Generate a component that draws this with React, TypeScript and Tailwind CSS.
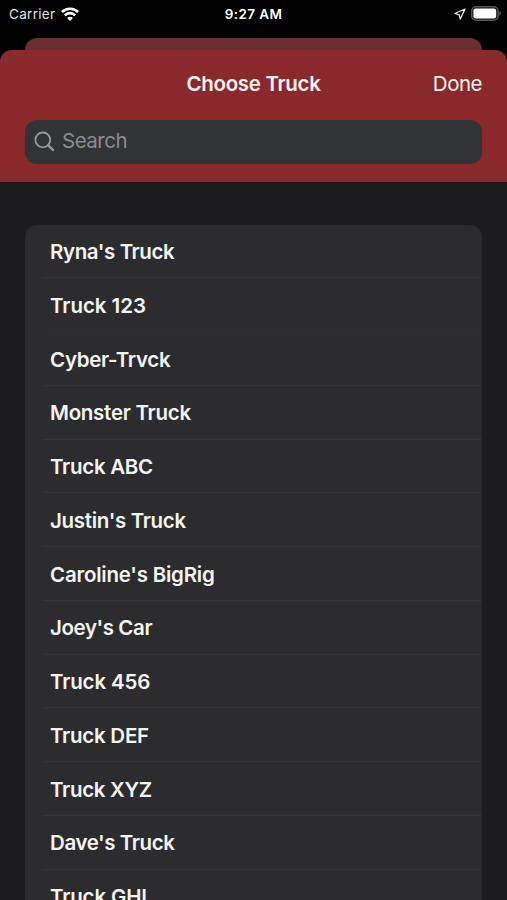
const trucks = [
  { name: "Ryna's Truck", tracking: "tracking-[-0.4px]" },
  { name: "Truck 123", tracking: "tracking-[-0.05px]" },
  { name: "Cyber-Trvck", tracking: "tracking-[-0.3px]" },
  { name: "Monster Truck", tracking: "tracking-[-0.27px]" },
  { name: "Truck ABC", tracking: "tracking-[-0.27px]" },
  { name: "Justin's Truck", tracking: "tracking-[-0.32px]" },
  { name: "Caroline's BigRig", tracking: "tracking-[-0.22px]" },
  { name: "Joey's Car", tracking: "tracking-[-0.4px]" },
  { name: "Truck 456", tracking: "tracking-[-0.15px]" },
  { name: "Truck DEF", tracking: "tracking-[-0.25px]" },
  { name: "Truck XYZ", tracking: "tracking-[-0.3px]" },
  { name: "Dave's Truck", tracking: "tracking-[-0.4px]" },
  { name: "Truck GHI", tracking: "tracking-[-0.15px]" },
];

function WifiIcon() {
  return (
    <svg className="h-[14px] w-[18px]" viewBox="0 0 18 14" fill="none" stroke="#fff" strokeWidth="2.6">
      <path d="M0.9 5C5.4 0.6 12.6 0.6 17.1 5" />
      <path d="M3.8 8.3C6.7 5.4 11.3 5.4 14.2 8.3" />
      <path d="M9 13.9L6.1 10.9C7.7 9.2 10.3 9.2 11.9 10.9Z" fill="#fff" stroke="none" />
    </svg>
  );
}

function LocationIcon() {
  return (
    <svg className="h-[12px] w-[12px]" viewBox="0 0 12 12" fill="none" stroke="#eee" strokeWidth="1.3" strokeLinejoin="round">
      <path d="M11 1L0.9 5.5L5.2 6.8L6.3 11Z" />
    </svg>
  );
}

function Battery() {
  return (
    <svg className="h-[15px] w-[31px]" viewBox="0 0 31 15">
      <rect x="0.7" y="0.7" width="26.4" height="13.6" rx="4.2" fill="#111" stroke="#555557" strokeWidth="1.4" />
      <rect x="2.4" y="2.4" width="22.8" height="10.2" rx="2.4" fill="#fff" />
      <path d="M28.3 5C30.4 5.8 30.4 9.2 28.3 10Z" fill="#555557" />
    </svg>
  );
}

function StatusBar() {
  return (
    <div className="grid h-[38px] grid-cols-3 items-start pt-[6px] text-[13.5px] leading-4 text-white">
      <div className="flex h-4 items-center gap-[6px] pl-[9px]">
        <span className="tracking-[0.3px] text-[#e4e4e4]">Carrier</span>
        <WifiIcon />
      </div>
      <div className="text-center font-semibold tracking-[0.42px]">9:27 AM</div>
      <div className="flex h-[15px] items-center justify-end gap-[5px] pr-[5px]">
        <LocationIcon />
        <Battery />
      </div>
    </div>
  );
}

export default function App() {
  return (
    <div className="flex h-[900px] w-[507px] flex-col overflow-hidden bg-black font-['Inter','Liberation_Sans',sans-serif]">
      <StatusBar />
      <div className="mx-[25px] h-6 shrink-0 rounded-t-[12px] bg-[#6b2e32]" />
      <main className="relative -mt-3 flex min-h-0 flex-1 flex-col overflow-hidden rounded-t-[12px] bg-[#1c1c1e]">
        <header className="h-[132px] shrink-0 border-b border-[#7d3336] bg-[#8a292b] px-[25px] text-[#fbf3ee]">
          <div className="grid h-[69.5px] grid-cols-[1fr_auto_1fr] items-center text-[20.5px]">
            <span />
            <h1 className="font-semibold tracking-[-0.32px]">Choose Truck</h1>
            <button className="text-right tracking-[-0.5px]">Done</button>
          </div>
          <label className="flex h-[44px] items-center rounded-[12px] bg-[#323335] pl-[9px]">
            <svg className="h-[22px] w-[22px]" viewBox="0 0 22 22" fill="none" stroke="#98989d" strokeWidth="1.8" strokeLinecap="round">
              <circle cx="8.8" cy="8.9" r="7.4" />
              <path d="M14.2 14.4L19 18.9" strokeWidth="2.3" />
            </svg>
            <input
              className="ml-[6px] flex-1 bg-transparent text-[20.5px] tracking-[-0.5px] outline-none placeholder:text-[#8b8b91]"
              placeholder="Search"
            />
          </label>
        </header>
        <ul className="mx-[25px] mt-[42.5px] min-h-0 flex-1 overflow-hidden rounded-t-[12px] bg-[#2c2c2e]">
          {trucks.map(({ name, tracking }, i) => (
            <li key={name} className="h-[53.75px] pl-[18px]">
              <div
                className={
                  "flex h-full items-center border-b pt-[3px] pl-[7px] text-[20.5px] font-semibold text-[#f4f4f4] " +
                  tracking +
                  (i === 1 ? " border-[#2e2e30]" : " border-[#343436]")
                }
              >
                {name}
              </div>
            </li>
          ))}
        </ul>
      </main>
    </div>
  );
}
